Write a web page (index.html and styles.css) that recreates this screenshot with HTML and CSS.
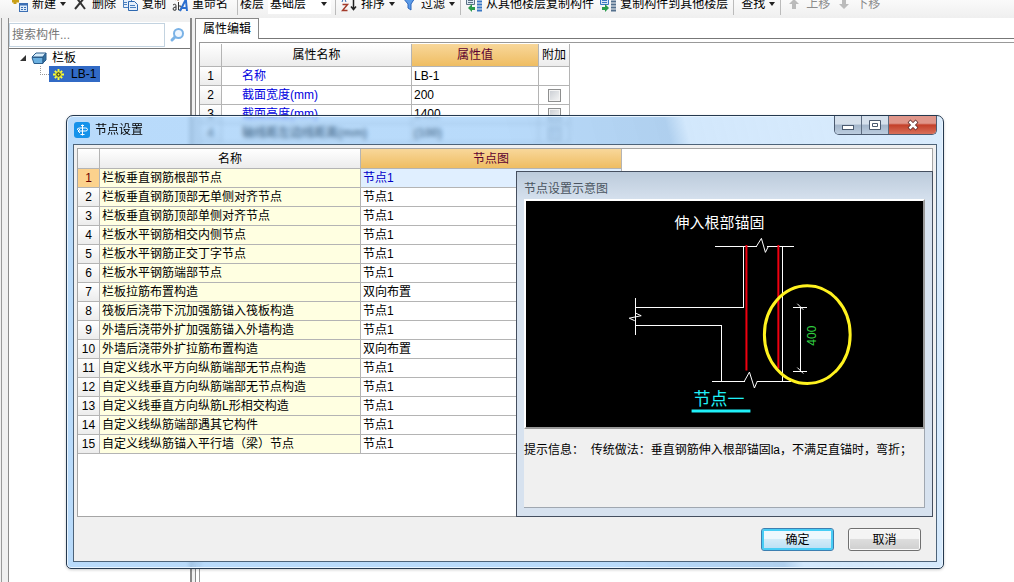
FILE: index.html
```html
<!DOCTYPE html>
<html lang="zh-CN">
<head>
<meta charset="utf-8">
<title>节点设置</title>
<link rel="stylesheet" href="styles.css">
</head>
<body>
<div class="app">
  <header class="toolbar">
    <div class="tools">
      <div class="group">
        <button class="tool"><svg class="icon" viewBox="0 0 16 16"><path d="M3 2v6M0 5h7" stroke="#c9a018" stroke-width="3"/><rect x="7.500" y="7.500" width="8" height="8" fill="#dceaf9" stroke="#3c6fb4"/><path d="M7 8.500h9" stroke="#3c6fb4" stroke-width="2"/><path d="M9 11.500h2m1 0h2m-5 2h2m1 0h2" stroke="#3c6fb4"/></svg><span>新建</span><i class="caret"></i></button>
        <button class="tool"><svg class="icon" viewBox="0 0 16 16"><path d="M4 1l9 12M13 1L3 13" stroke="#333" stroke-width="2" fill="none"/></svg><span>删除</span></button>
        <button class="tool"><svg class="icon" viewBox="0 0 16 16"><path d="M1.500 1.500h6l2 2v8h-8z" fill="#e6f0fb" stroke="#4a80bf"/><path d="M6.500 5.500h6l3 3v6h-9z" fill="#e6f0fb" stroke="#2d68b0"/><path d="M8 9.500h5m-5 2h6m-12-5h3m-3 2h3" stroke="#4a80bf"/></svg><span>复制</span></button>
        <button class="tool"><svg class="icon" viewBox="0 0 16 16"><path d="M3 4l4-3 3 3M6 1v4" stroke="#9a5a30" fill="none"/><path d="M1 9q3-2 3 1v4q-3 1-3-1t3-2M6.500 6v8q3 1 3-2t-3-2" stroke="#333" fill="none"/><path d="M8 15l5-10h1l1 10M10 12h5" stroke="#2b6fd0" stroke-width="2" fill="none"/></svg><span>重命名</span></button>
      </div>
      <div class="group floor">
        <label for="floor">楼层</label>
        <span class="combo"><select id="floor"><option>基础层</option></select><i class="caret"></i></span>
      </div>
      <div class="group">
        <button class="tool"><svg class="icon" viewBox="0 0 16 16"><path d="M1 6l2-5 2 5" stroke="#356db5" fill="none"/><path d="M1.500 8.500h5l-5 6h5" stroke="#a33b2b" stroke-width="1.500" fill="none"/><path d="M12.500 1v12M10 10.500l2.500 3 2.500-3" stroke="#222" stroke-width="1.500" fill="none"/></svg><span>排序</span><i class="caret"></i></button>
        <button class="tool"><svg class="icon" viewBox="0 0 16 16"><path d="M2 2h12L10 8v6l-3-2V8z" fill="#5b9be8" stroke="#2c65bb"/></svg><span>过滤</span><i class="caret"></i></button>
      </div>
      <div class="group copy">
        <button class="tool"><svg class="icon" viewBox="0 0 16 16"><path d="M.5 1.500h8v7h-8z" fill="#dce7f2" stroke="#5b7084"/><path d="M2 4.500h5m-5 2h5" stroke="#5b7084"/><path d="M11 2.500h5m-5 3h5m-5 3h5m-5 3h5m-5 3h5" stroke="#3977c4" stroke-width="2"/><path d="M9 11H6V8l-4 4 4 4v-2h3z" fill="#2b9c4b"/></svg><span>从其他楼层复制构件</span></button>
        <button class="tool"><svg class="icon" viewBox="0 0 16 16"><path d="M.5 1.500h8v7h-8z" fill="#dce7f2" stroke="#3977c4"/><path d="M2 4.500h5m-5 2h5" stroke="#3977c4"/><path d="M11 2.500h5m-5 3h5m-5 3h5m-5 3h5m-5 3h5" stroke="#54708d" stroke-width="2"/><path d="M2 11h3V8l4 4-4 4v-2H2z" fill="#2b9c4b"/></svg><span>复制构件到其他楼层</span></button>
      </div>
      <div class="group find"><button class="tool"><span>查找</span><i class="caret"></i></button></div>
      <div class="group">
        <button class="tool" disabled><svg class="icon" viewBox="0 0 16 16"><path d="M8 3l5 5h-3v5H6V8H3z" fill="#bbb"/></svg><span>上移</span></button>
        <button class="tool" disabled><svg class="icon" viewBox="0 0 16 16"><path d="M8 13l5-5h-3V3H6v5H3z" fill="#bbb"/></svg><span>下移</span></button>
      </div>
    </div>
  </header>
  <main class="work">
    <div class="rail"></div>
    <aside class="side">
      <div class="search">
        <input type="text" placeholder="搜索构件..." aria-label="搜索构件">
        <button aria-label="搜索"><svg class="icon" viewBox="0 0 16 16"><circle cx="9.500" cy="6.500" r="4.500" fill="#eef6ff" stroke="#7ab2e6" stroke-width="2"/><path d="M6 10L3 13" stroke="#7ab2e6" stroke-width="3" stroke-linecap="round"/></svg></button>
      </div>
      <div class="tree">
        <div class="node"><svg class="twist" viewBox="0 0 8 8"><path d="M7 1v6H1z" fill="#333"/></svg><svg class="icon" viewBox="0 0 16 16"><path d="M1 7l4-4h10l-3 4z" fill="#d6ecfa" stroke="#2a5d8c"/><path d="M1 7.500h11v6H3z" fill="#6bb0e0" stroke="#2a5d8c"/><path d="M12 7l3-4v7l-3 3z" fill="#34719f" stroke="#2a5d8c"/></svg><span>栏板</span></div>
        <div class="node child"><i class="branch"></i><span class="picked"><svg class="gear" viewBox="0 0 12 12"><path d="M6 0v12M0 6h12M2 2l8 8M10 2l-8 8" stroke="#ff3" stroke-width="2"/><circle cx="6" cy="6" r="3" fill="#4a4a20" stroke="#ff3"/><circle cx="6" cy="6" r="1" fill="#ff3"/></svg>LB-1</span></div>
      </div>
    </aside>
    <div class="splitter"></div>
    <section class="props">
      <div class="tabs"><button class="tab">属性编辑</button></div>
      <div class="sheet">
        <table class="grid prop-grid">
          <colgroup><col class="c-num"><col class="c-prop"><col class="c-val"><col class="c-add"></colgroup>
          <thead><tr><th></th><th>属性名称</th><th class="hot">属性值</th><th>附加</th></tr></thead>
          <tbody>
            <tr><th>1</th><td>名称</td><td>LB-1</td><td></td></tr>
            <tr><th>2</th><td>截面宽度(mm)</td><td>200</td><td><input type="checkbox" aria-label="附加 截面宽度"></td></tr>
            <tr><th>3</th><td>截面高度(mm)</td><td>1400</td><td><input type="checkbox" aria-label="附加 截面高度"></td></tr>
            <tr class="dim"><th>4</th><td>轴线距左边线距离(mm)</td><td>(100)</td><td><input type="checkbox" aria-label="附加 轴线距左边线距离"></td></tr>
          </tbody>
        </table>
      </div>
    </section>
  </main>

  <div class="dialog" role="dialog" aria-labelledby="dlg-title">
    <div class="titlebar">
      <svg class="logo" viewBox="0 0 16 16"><rect width="16" height="16" rx="3" fill="#1592ea"/><path d="M8.500 2.500v11M3.500 8q-.5-2 2-2h6q2 0 2 1.500t-2 1.500H4M6 7L4 9l2 2M6.500 12.500h4M7 3.500h3" stroke="#fff" fill="none"/></svg>
      <h1 id="dlg-title">节点设置</h1>
      <div class="winbtns">
        <button aria-label="最小化"><svg viewBox="0 0 12 12"><rect x=".5" y="6.500" width="11" height="4" fill="#fff" stroke="#4c5b70"/></svg></button>
        <button aria-label="最大化"><svg viewBox="0 0 12 12"><path d="M.5 1.500h11v9H.5zM3.500 4.500h5v3h-5z" fill="#fff" stroke="#4c5b70"/></svg></button>
        <button class="close" aria-label="关闭"><svg viewBox="0 0 12 12"><path d="M2 2l8 8M10 2l-8 8" stroke="#5b2b2b" stroke-width="4"/><path d="M2.500 2.500l7 7M9.500 2.500l-7 7" stroke="#fff" stroke-width="2.500"/></svg></button>
      </div>
    </div>
    <div class="client">
      <div class="list">
        <table class="grid node-grid">
          <colgroup><col class="c-num"><col class="c-name"><col class="c-name"></colgroup>
          <thead><tr><th></th><th>名称</th><th class="hot">节点图</th></tr></thead>
          <tbody>
            <tr class="current"><th>1</th><td>栏板垂直钢筋根部节点</td><td>节点1</td></tr>
            <tr><th>2</th><td>栏板垂直钢筋顶部无单侧对齐节点</td><td>节点1</td></tr>
            <tr><th>3</th><td>栏板垂直钢筋顶部单侧对齐节点</td><td>节点1</td></tr>
            <tr><th>4</th><td>栏板水平钢筋相交内侧节点</td><td>节点1</td></tr>
            <tr><th>5</th><td>栏板水平钢筋正交丁字节点</td><td>节点1</td></tr>
            <tr><th>6</th><td>栏板水平钢筋端部节点</td><td>节点1</td></tr>
            <tr><th>7</th><td>栏板拉筋布置构造</td><td>双向布置</td></tr>
            <tr><th>8</th><td>筏板后浇带下沉加强筋锚入筏板构造</td><td>节点1</td></tr>
            <tr><th>9</th><td>外墙后浇带外扩加强筋锚入外墙构造</td><td>节点1</td></tr>
            <tr><th>10</th><td>外墙后浇带外扩拉筋布置构造</td><td>双向布置</td></tr>
            <tr><th>11</th><td>自定义线水平方向纵筋端部无节点构造</td><td>节点1</td></tr>
            <tr><th>12</th><td>自定义线垂直方向纵筋端部无节点构造</td><td>节点1</td></tr>
            <tr><th>13</th><td>自定义线垂直方向纵筋L形相交构造</td><td>节点1</td></tr>
            <tr><th>14</th><td>自定义线纵筋端部遇其它构件</td><td>节点1</td></tr>
            <tr><th>15</th><td>自定义线纵筋锚入平行墙（梁）节点</td><td>节点1</td></tr>
          </tbody>
        </table>
        <section class="preview">
          <h2>节点设置示意图</h2>
          <svg class="drawing" viewBox="0 0 398 227">
            <g fill="none" stroke="#fff" shape-rendering="crispEdges">
              <path d="M189 45.500h43m10 0h27M218.500 45v61.500H109.500M109.500 124.500h86v56M257.500 45v135M186 180.500h34m12 0h34M109.500 97v37M275.500 106v64M268 106.500h14M268 170.500h14"/>
            </g>
            <path d="M231 45.500l5-8 4 14 3-6M219 180.500l5-9 5 16 3-7M110 112.500l5.500 2.500-12 2.500 5.500 2.500M272 103l6 6M272 167l6 6" fill="none" stroke="#fff"/>
            <path d="M221 44v126M253 44v124" stroke="#f00010" stroke-width="2"/>
            <ellipse cx="282" cy="134" rx="43" ry="49" fill="none" stroke="#fff21f" stroke-width="3"/>
            <text class="cad-title" x="149" y="27">伸入根部锚固</text>
            <text class="cad-dim" transform="translate(291 145) rotate(-90)">400</text>
            <text class="cad-name" x="168" y="205">节点一</text>
            <path d="M166 210.500h59" stroke="#20f0f8" stroke-width="3"/>
          </svg>
          <p class="hint">提示信息：&nbsp; 传统做法：垂直钢筋伸入根部锚固la，不满足直锚时，弯折；</p>
        </section>
      </div>
      <footer class="actions">
        <button class="btn primary">确定</button>
        <button class="btn">取消</button>
      </footer>
    </div>
  </div>
</div>
</body>
</html>
```

FILE: styles.css
```css
* { box-sizing: border-box; }
html, body { height: 100%; }
body {
  margin: 0;
  overflow: hidden;
  background: #fff;
  color: #000;
  font: 12px/18px "Liberation Sans", "Noto Sans CJK SC", sans-serif;
}
button, input, select { font: inherit; color: inherit; }
button { padding: 0; border: 0; background: none; }
svg { display: block; }
.icon { width: 16px; height: 16px; flex: none; }

.app { position: relative; display: flex; flex-direction: column; height: 100%; }

.toolbar { height: 18px; overflow: hidden; background: linear-gradient(#fafafa, #efefef); flex: none; }
.tools { display: flex; align-items: center; height: 28px; margin-top: -10px; padding-left: 12px; white-space: nowrap; }
.group { display: flex; align-items: center; gap: 6px; height: 22px; padding: 0 5px; border-left: 1px solid #bbb; }
.group:first-child { padding: 0 9px 0 0; border-left: 0; }
.tool { display: flex; align-items: center; gap: 4px; }
.tool:disabled { color: #8c8c8c; }
.caret { width: 0; height: 0; border: 3px solid transparent; border-top: 4px solid #222; border-bottom: 0; }
.floor { gap: 4px; padding: 0 4px 0 2px; }
.combo { display: flex; align-items: center; width: 63px; padding-right: 4px; background: #fff; }
.combo select { flex: 1; min-width: 0; height: 20px; padding: 0 2px; border: 0; background: none; appearance: none; }
.find { padding-left: 7px; }

.work { display: flex; flex: 1; min-height: 0; }
.rail { width: 9px; background: linear-gradient(90deg, #f0f0f0 1px, #999 1px, #999 2px, #f0f0f0 2px); border-right: 1px solid #8c8c8c; flex: none; }
.side { display: flex; flex-direction: column; width: 181px; padding-top: 4px; background: #f0f0f0; flex: none; }
.search { display: flex; align-items: center; height: 26px; background: #fff; }
.search input { flex: 1; min-width: 0; height: 24px; padding: 0 2px; border: 1px solid #c3d3e0; outline: 0; background: #fff; }
.search input::placeholder { color: #777; }
.search button { padding: 0 5px 0 4px; }
.tree { flex: 1; background: #fff; border-top: 1px solid #777; }
.node { display: flex; align-items: center; height: 16px; padding-left: 10px; gap: 5px; }
.node:first-child { height: 17px; }
.twist { width: 8px; height: 8px; margin-right: -1px; }
.child { padding-left: 31px; gap: 0; }
.branch { width: 9px; height: 9px; margin-bottom: 8px; border: dotted #999; border-width: 0 0 1px 1px; }
.picked { display: flex; align-items: center; gap: 7px; height: 16px; padding: 0 4px; background: #316ac5; }
.gear { width: 11px; height: 11px; }
.splitter { width: 6px; background: #f0f0f0; border-left: 2px solid #888; border-right: 1px solid #888; flex: none; }

.props { display: flex; flex: 1; flex-direction: column; min-width: 0; }
.tabs { display: flex; height: 21px; border-bottom: 1px solid #777; flex: none; }
.tab { height: 21px; padding: 0 7px; border: 1px solid #888; border-width: 1px 1px 0 0; background: #fff; }
.sheet { flex: 1; margin: 3px 0 0 3px; padding-top: 1px; border: 1px solid #999; border-width: 1px 0 0 1px; }

.grid { border-collapse: separate; border-spacing: 0; table-layout: fixed; }
.grid th, .grid td { height: 19px; padding: 0 2px; border: 1px solid #b4b4b4; border-width: 0 1px 1px 0; line-height: 18px; font-weight: 400; text-align: left; white-space: nowrap; }
.grid th { background: linear-gradient(#fff, #ececec); text-align: center; }
.grid thead .hot { background: linear-gradient(#f8d79a, #efbd62); color: #5c0030; }
.c-num { width: 22px; }

.prop-grid { width: 370px; }
.prop-grid thead th { height: 23px; padding: 0; }
.prop-grid td:nth-child(2) { padding-left: 20px; color: #0000e0; }
.prop-grid .dim td { font-weight: 700; }
.prop-grid .dim td:nth-child(2) { color: #000; }
.prop-grid td:nth-child(4) { padding: 0; }
.c-prop { width: 190px; }
.c-val { width: 127px; }
.c-add { width: 31px; }
input[type="checkbox"] { display: block; width: 13px; height: 13px; margin: 0 auto; appearance: none; border: 1px solid #8e8f8f; background: linear-gradient(135deg, #c8ccd2, #f6f6f6); box-shadow: inset 0 0 0 1px #f4f4f4; }

/* dialog window */
.dialog {
  position: absolute;
  inset: 115px 70px 13px 66px;
  display: flex;
  flex-direction: column;
  padding: 0 6px 6px;
  border: 1px solid #25394f;
  border-radius: 7px 7px 5px 5px;
  background: linear-gradient(75deg, #8fc5f8a0 55%, #86b7e6a8 72%, #b4d8fa98 74%, #b4d8fa80);
  backdrop-filter: blur(2px);
  box-shadow: inset 0 0 0 1px #e8f4ff, 0 1px 3px #0003;
}
.titlebar { display: flex; align-items: center; height: 28px; padding-left: 1px; flex: none; }
.logo { width: 16px; height: 16px; }
h1 { margin: 0 0 0 5px; font-size: 12px; font-weight: 400; }
.winbtns { display: flex; align-self: flex-start; margin-left: auto; border: 1px solid #4c5b70; border-top: 0; border-radius: 0 0 5px 5px; overflow: hidden; }
.winbtns button { display: grid; place-items: center; width: 27px; height: 18px; border-right: 1px solid #5d6c80; background: linear-gradient(#d5e0ec 45%, #a3b5ca 50%, #bccddf); }
.winbtns svg { width: 12px; height: 12px; }
.winbtns .close { width: 47px; border-right: 0; background: linear-gradient(#e0968a 40%, #c3402a 50%, #d8705a); }

.client { display: flex; flex: 1; flex-direction: column; min-height: 0; padding: 3px 3px 0; border: 1px solid #4d6379; background: #f0f0f0; }
.list { position: relative; flex: 1; min-height: 0; border: 1px solid #a5a5a5; background: #fff; }
.node-grid { width: 544px; }
.node-grid thead th { height: 20px; }
.c-name { width: 261px; }
.node-grid td:nth-child(2) { background: #ffffe1; }
.node-grid .current th { background: #fcd28d; color: #6b0000; }
.node-grid .current td:nth-child(3) { background: #e0efff; color: #0000c8; }

.preview { position: absolute; right: -1px; bottom: -1px; display: flex; flex-direction: column; width: 417px; height: 346px; padding: 7px 7px 8px; border: 1px solid #454f5f; background: linear-gradient(#bccbdb, #d7e2ef 30px); }
h2 { margin: 0; line-height: 20px; font-size: 12px; font-weight: 400; color: #4a5460; }
.drawing { width: 100%; border: 2px solid #fff; border-color: #fff #999 #999 #fff; background: #000; flex: none; }
.hint { flex: 1; margin: 0; padding-top: 12px; border-right: 1px solid #a0a7b0; border-bottom: 1px solid #a0a7b0; background: #f0f0f0; white-space: nowrap; }
.cad-title { font-size: 15px; fill: #fff; }
.cad-name { font-size: 17px; fill: #20f0f8; }
.cad-dim { font-size: 12px; fill: #30d040; }

.actions { display: flex; justify-content: flex-end; gap: 14px; padding: 11px 12px 10px; flex: none; }
.btn { width: 73px; height: 23px; border: 1px solid #707070; border-radius: 3px; background: linear-gradient(#f4f4f4 45%, #dddddd 50%, #cfcfcf); box-shadow: inset 0 0 0 1px #fafafa; }
.primary { border-color: #3c7fb1; background: linear-gradient(#eef8fd 45%, #d2ebf8 50%, #b8dff5); box-shadow: inset 0 0 0 2px #48cdf5; }
```
